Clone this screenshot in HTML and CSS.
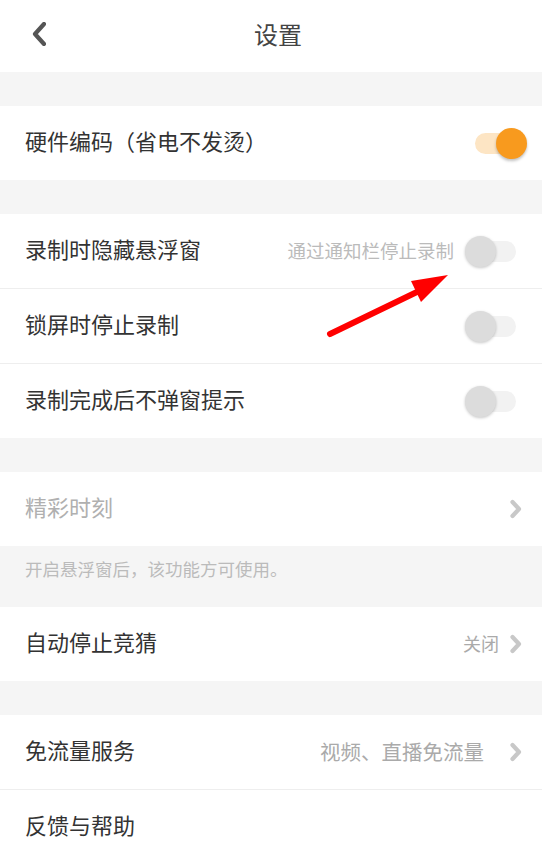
FILE: index.html
```html
<!DOCTYPE html>
<html lang="zh-CN">
<head>
<meta charset="utf-8">
<title>设置</title>
<link rel="stylesheet" href="styles.css">
</head>
<body>
<div class="page">
  <header class="header">
    <div class="back">
      <svg width="14" height="24" viewBox="0 0 14 24"><path d="M12 2 L3 12 L12 22" fill="none" stroke="#555" stroke-width="4.2" stroke-linecap="round" stroke-linejoin="round"/></svg>
    </div>
    <div class="title">设置</div>
    <div></div>
  </header>

  <section class="group">
    <div class="row">
      <span class="label">硬件编码（省电不发烫）</span>
      <span class="toggle on"><span class="track"></span><span class="thumb"></span></span>
    </div>
  </section>

  <section class="group">
    <div class="row">
      <span class="label">录制时隐藏悬浮窗</span>
      <span class="right">
        <span class="hint">通过通知栏停止录制</span>
        <span class="toggle"><span class="track"></span><span class="thumb"></span></span>
      </span>
    </div>
    <div class="row">
      <span class="label">锁屏时停止录制</span>
      <span class="toggle"><span class="track"></span><span class="thumb"></span></span>
    </div>
    <div class="row">
      <span class="label">录制完成后不弹窗提示</span>
      <span class="toggle"><span class="track"></span><span class="thumb"></span></span>
    </div>
  </section>

  <section class="group">
    <div class="row nav">
      <span class="label disabled">精彩时刻</span>
      <span class="right">
        <svg class="chev" width="12" height="20" viewBox="0 0 12 20"><path d="M2.5 3 L9 10 L2.5 17" fill="none" stroke="#c8c8c8" stroke-width="4.2" stroke-linecap="round" stroke-linejoin="round"/></svg>
      </span>
    </div>
  </section>
  <div class="note">开启悬浮窗后，该功能方可使用。</div>

  <section class="group flush">
    <div class="row nav">
      <span class="label">自动停止竞猜</span>
      <span class="right">
        <span class="value">关闭</span>
        <svg class="chev" width="12" height="20" viewBox="0 0 12 20"><path d="M2.5 3 L9 10 L2.5 17" fill="none" stroke="#c8c8c8" stroke-width="4.2" stroke-linecap="round" stroke-linejoin="round"/></svg>
      </span>
    </div>
  </section>

  <section class="group">
    <div class="row nav">
      <span class="label">免流量服务</span>
      <span class="right wide">
        <span class="value big">视频、直播免流量</span>
        <svg class="chev" width="12" height="20" viewBox="0 0 12 20"><path d="M2.5 3 L9 10 L2.5 17" fill="none" stroke="#c8c8c8" stroke-width="4.2" stroke-linecap="round" stroke-linejoin="round"/></svg>
      </span>
    </div>
    <div class="row nav">
      <span class="label">反馈与帮助</span>
    </div>
  </section>

  <svg class="arrow" width="140" height="80" viewBox="0 0 140 80">
    <line x1="10" y1="69" x2="99" y2="26" stroke="#ff0000" stroke-width="6" stroke-linecap="round"/>
    <polygon points="128,10 91,16 101,37" fill="#ff0000"/>
  </svg>
</div>
</body>
</html>
```
FILE: styles.css
```css
* { box-sizing: border-box; }
html, body {
  margin: 0;
  padding: 0;
  background: #f5f5f5;
  font-family: "Noto Sans CJK SC", "Noto Sans", sans-serif;
}
.page {
  position: relative;
  width: 542px;
  min-height: 858px;
  overflow: hidden;
}
.header {
  height: 72px;
  background: #fff;
  display: grid;
  grid-template-columns: 80px 1fr 66px;
  align-items: center;
}
.back {
  padding-left: 32px;
  display: flex;
  align-items: center;
  height: 72px;
  padding-bottom: 4px;
}
.title {
  text-align: center;
  font-size: 24px;
  color: #444;
  line-height: 30px;
  padding-bottom: 4px;
}
.group {
  margin-top: 34px;
  background: #fff;
}
.group.flush { margin-top: 0; }
.row {
  height: 74px;
  display: flex;
  align-items: center;
  justify-content: space-between;
  padding: 0 15px 0 25px;
}
.row + .row { border-top: 1px solid #eeeeee; height: 75px; }
.row.nav { padding-right: 20px; }
.label {
  font-size: 22px;
  color: #333;
  line-height: 30px;
  padding-bottom: 7px;
}
.label.disabled { color: #b0b0b0; }
.right {
  display: flex;
  align-items: center;
  gap: 11px;
}
.right.wide { gap: 26px; }
.hint {
  font-size: 18.5px;
  color: #bbbbbb;
  line-height: 24px;
  padding-bottom: 3px;
}
.value {
  font-size: 18px;
  color: #aaaaaa;
  line-height: 24px;
  padding-bottom: 2px;
}
.value.big { font-size: 20.5px; }
.chev { display: block; }
.toggle {
  position: relative;
  width: 62px;
  height: 31px;
  display: block;
}
.toggle .track {
  position: absolute;
  left: 10px;
  top: 5px;
  width: 41px;
  height: 21px;
  border-radius: 11px;
  background: #f2f2f2;
}
.toggle .thumb {
  position: absolute;
  left: 0;
  top: 0;
  width: 31px;
  height: 31px;
  border-radius: 50%;
  background: #dcdcdc;
  box-shadow: 0 1px 3px rgba(0,0,0,0.22);
}
.toggle.on .track { background: #fde5c4; }
.toggle.on .thumb {
  left: 31px;
  background: #f89a1e;
  box-shadow: 0 2px 3px rgba(0,0,0,0.25);
}
.note {
  height: 61px;
  padding: 13px 25px 0;
  font-size: 17.5px;
  line-height: 20px;
  color: #bbbbbb;
}
.arrow {
  position: absolute;
  left: 320px;
  top: 265px;
  pointer-events: none;
}
```
